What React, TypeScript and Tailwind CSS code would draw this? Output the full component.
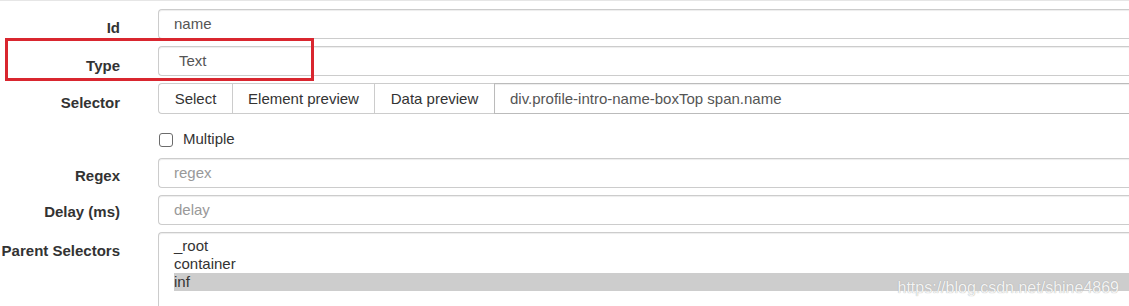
import React from 'react'

const font = {fontFamily: '"Liberation Sans", Arial, sans-serif'}

function Label({children, pt = 'pt-[9px]'}: {children: React.ReactNode; pt?: string}) {
	return (
		<div className={`w-[120px] shrink-0 ${pt} text-right text-[15px] font-bold leading-[20px] text-[#333]`}>
			{children}
		</div>
	)
}

function TextInput({value, placeholder, pl = 'pl-[15px]'}: {value?: string; placeholder?: string; pl?: string}) {
	return (
		<div
			className={`flex h-[30px] flex-1 items-center rounded-l-[4px] border border-r-0 border-[#ccc] bg-white ${pl} pt-[1px] text-[15px] shadow-[inset_0_1px_1px_rgba(0,0,0,0.075)]`}>
			{value ? <span className="text-[#555]">{value}</span> : <span className="text-[#999]">{placeholder}</span>}
		</div>
	)
}

function Row({label, pt, children}: {label?: string; pt?: string; children: React.ReactNode}) {
	return (
		<div className="flex items-start">
			<Label pt={pt}>{label}</Label>
			<div className="ml-[38px] flex flex-1">{children}</div>
		</div>
	)
}

export default function App() {
	const buttons = [
		{name: 'Select', w: 'w-[74px]', first: true},
		{name: 'Element preview', w: 'w-[142px]', first: false},
		{name: 'Data preview', w: 'w-[120px]', first: false},
	]

	return (
		<div
			className="relative h-[306px] w-[1129px] overflow-hidden border-t border-[#e6e6e6] bg-white"
			style={font}>
			<div className="flex flex-col gap-[7px] pt-[8px]">
				<Row label="Id">
					<TextInput value="name" />
				</Row>
				<Row label="Type" pt="pt-[10px]">
					<TextInput value="Text" pl="pl-[20px]" />
				</Row>
				<Row label="Selector" pt="pt-[10px]">
					<div className="flex h-[31px] flex-1">
						{buttons.map((b) => (
							<div
								key={b.name}
								className={`flex ${b.w} items-center justify-center border-y border-l border-[#ccc] bg-white pt-[1px] text-[15px] text-[#333] ${
									b.first ? 'rounded-l-[4px]' : ''
								}`}>
								{b.name}
							</div>
						))}
						<div className="flex flex-1 items-center border-y border-l border-[#bbb] bg-white pl-[15px] pt-[1px] text-[15px] text-[#555] shadow-[inset_0_1px_1px_rgba(0,0,0,0.075)]">
							div.profile-intro-name-boxTop span.name
						</div>
					</div>
				</Row>
				<Row>
					<div className="flex h-[30px] items-start pt-[12px]">
						<div className="ml-[1px] h-[14px] w-[14px] rounded-[3px] border border-[#6b6b6b] bg-white" />
						<span className="ml-[10px] mt-[-4px] text-[15px] leading-[20px] text-[#333]">Multiple</span>
					</div>
				</Row>
				<Row label="Regex" pt="pt-[8px]">
					<TextInput placeholder="regex" />
				</Row>
				<Row label="Delay (ms)" pt="pt-[7px]">
					<TextInput placeholder="delay" />
				</Row>
				<Row label="Parent Selectors" pt="pt-[9px]">
					<div className="h-[90px] flex-1 rounded-tl-[4px] border-l border-t border-[#ccc] bg-white pl-[15px] pt-[4px] text-[15px] leading-[18px] text-[#333] shadow-[inset_0_1px_1px_rgba(0,0,0,0.075)]">
						<div>_root</div>
						<div>container</div>
						<div className="bg-[#cdcdcd]">inf</div>
					</div>
				</Row>
			</div>

			<div className="absolute left-[5px] top-[37px] h-[43px] w-[309px] border-[3px] border-[#d9262f]" />

			<div className="absolute right-[10px] top-[277px] text-[16px] leading-[20px] text-[#f4f4f4] [text-shadow:0_0_1px_#9a9a9a]">
				https://blog.csdn.net/shine4869
			</div>
		</div>
	)
}
